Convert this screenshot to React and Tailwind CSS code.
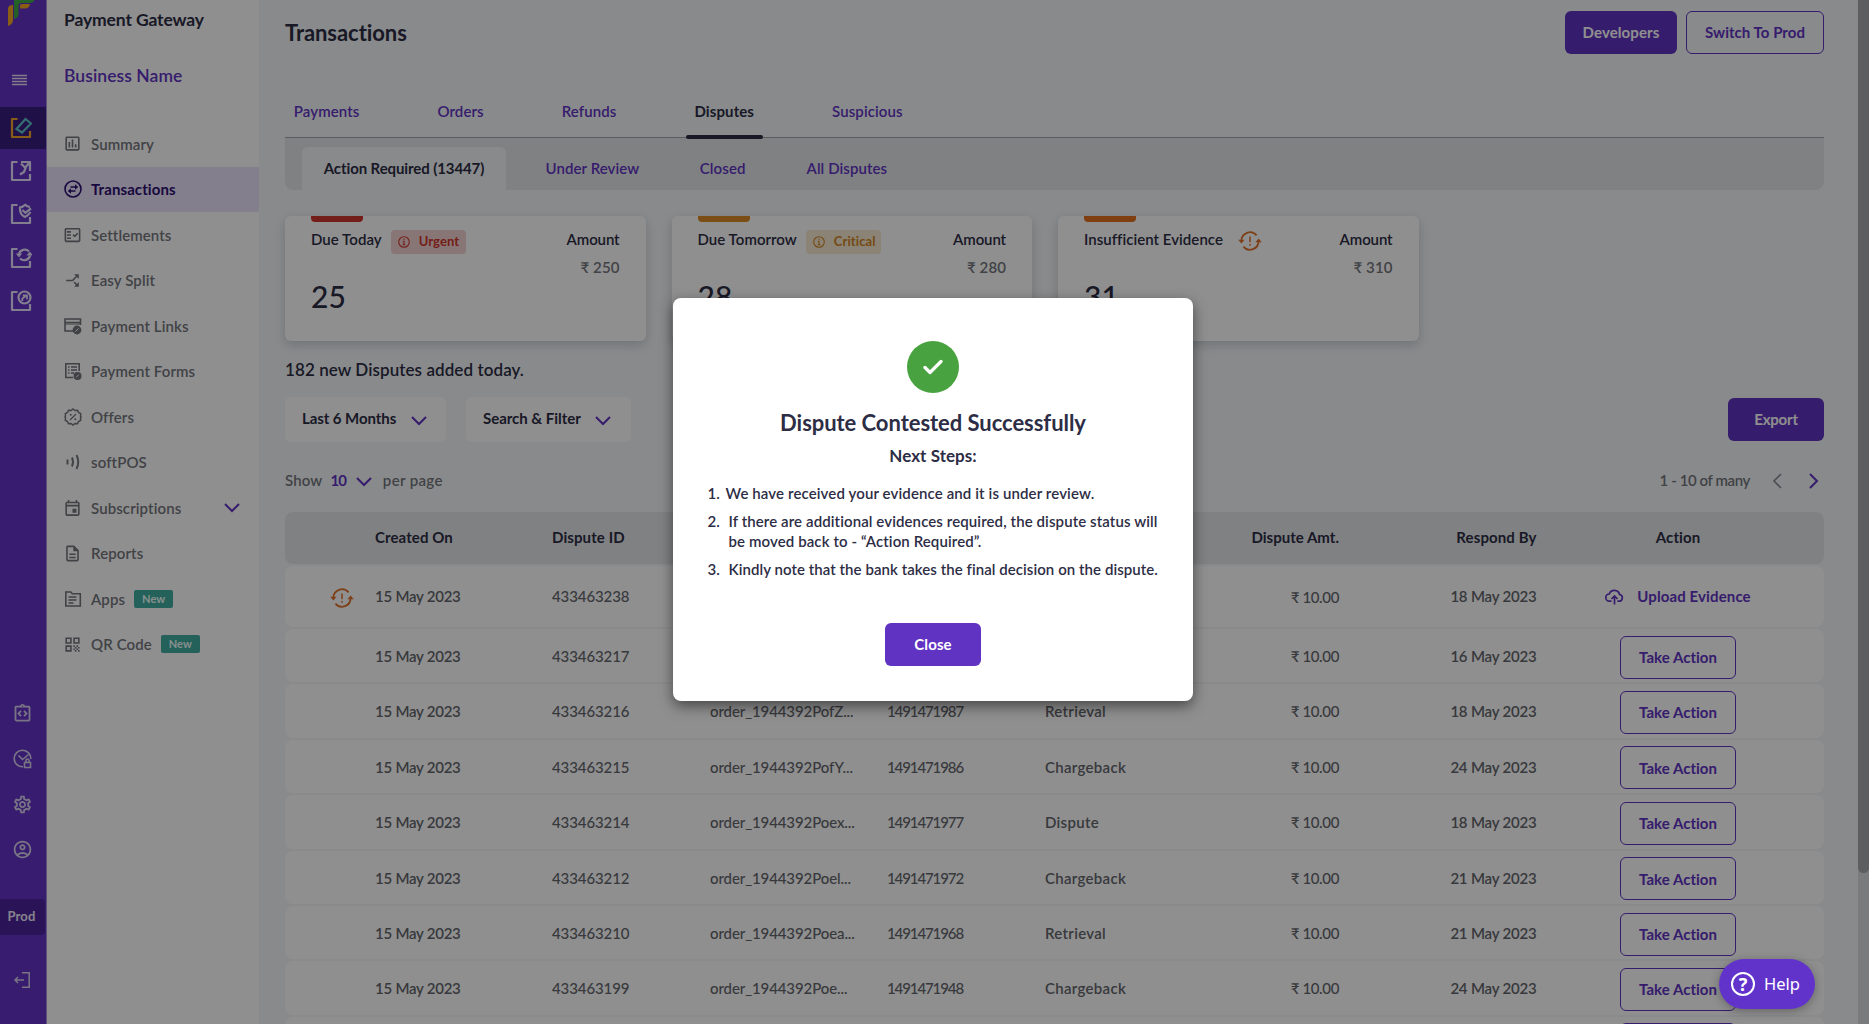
import {
  MdCallSplit,
  MdOutlineAccountCircle,
  MdOutlineDescription,
  MdOutlineEvent,
  MdOutlineFactCheck,
  MdOutlineInsertChartOutlined,
  MdOutlineIntegrationInstructions,
  MdOutlineSettings,
  MdQrCode,
} from 'react-icons/md';

const rows = [
  { id: '433463217', order: '', ref: '', type: '', respond: '16 May 2023' },
  { id: '433463216', order: 'order_1944392PofZ...', ref: '1491471987', type: 'Retrieval', respond: '18 May 2023' },
  { id: '433463215', order: 'order_1944392PofY...', ref: '1491471986', type: 'Chargeback', respond: '24 May 2023' },
  { id: '433463214', order: 'order_1944392Poex...', ref: '1491471977', type: 'Dispute', respond: '18 May 2023' },
  { id: '433463212', order: 'order_1944392Poel...', ref: '1491471972', type: 'Chargeback', respond: '21 May 2023' },
  { id: '433463210', order: 'order_1944392Poea...', ref: '1491471968', type: 'Retrieval', respond: '21 May 2023' },
  { id: '433463199', order: 'order_1944392Poe...', ref: '1491471948', type: 'Chargeback', respond: '24 May 2023' },
];

const tableCols = 'grid grid-cols-[90px_177px_158px_177px_158px_294px_197.5px_283px] items-center';

function Chevron({ className = '' }) {
  return (
    <svg viewBox="0 0 16 10" className={`h-[10px] w-4 shrink-0 ${className}`} fill="none" stroke="#6133c2" strokeWidth="2">
      <path d="M1 1l7 7 7-7" />
    </svg>
  );
}

// circular arrows with an exclamation mark
function RetryAlert({ className = '' }) {
  return (
    <svg viewBox="0 0 24 20" className={`h-5 w-6 shrink-0 ${className}`} fill="none" stroke="#e0702a" strokeWidth="1.7">
      <path d="M3.4 10A8.6 8.6 0 0 1 18.6 4.4" />
      <path d="M20.6 10A8.6 8.6 0 0 1 5.4 15.6" />
      <path d="M0.2 8.8h6.4L3.4 12.4z M17.4 11.2h6.4L20.6 7.6z" fill="#e0702a" stroke="none" />
      <path d="M12 5.5v5.8M12 13v1.7" strokeWidth="1.5" />
    </svg>
  );
}

function InfoIcon({ className = '' }) {
  return (
    <svg viewBox="0 0 12 12" className={`size-3 ${className}`} fill="none" stroke="currentColor" strokeWidth="1.1">
      <circle cx="6" cy="6" r="5.3" />
      <path d="M4.8 5.2H6v3.4M4.6 8.8h2.8M6 2.7v1.3" />
    </svg>
  );
}

/* ---- left rail ---- */

function RailBox({ children, stroke = '#e9e0ff' }) {
  return (
    <svg viewBox="0 0 22 22" className="size-[22px]" fill="none" strokeWidth="2.2" strokeLinejoin="round">
      <path d="M7.5 2H2v18h18v-6" stroke={stroke} />
      {children}
    </svg>
  );
}

function Rail() {
  return (
    <aside className="flex w-[47px] shrink-0 flex-col border-r border-[#a48fdc] bg-[#6433c6]">
      <svg viewBox="0 0 46 28" className="h-7 w-[46px]">
        <path d="M8 26V9q0-4 5-4v15q0 4-5 6z" fill="#f7a823" />
        <path d="M20 8.5V5.5q0-1.5 2-1.5h8q-1 4.5-5 4.5z" fill="#f7a823" />
        <path d="M14 19V0h20.500q-1.500 3-5 3h-8Q18.500 3 18.500 6v8q0 4-4.500 5z" fill="#3fae49" />
      </svg>
      <svg viewBox="0 0 15 12" className="mt-[46px] ml-3 h-3 w-[15px]" stroke="#e6dff6" strokeWidth="1.4">
        <path d="M0 1.500h15M0 4.500h15M0 7.500h15M0 10.500h15" />
      </svg>
      <div className="mt-[21px] flex h-[42px] items-center bg-[#3a1d80] pl-[9.5px]">
        <RailBox stroke="#f5a52c">
          <path d="M6.5 12L15.5 2l5.500 4.500L12 15.500z" stroke="#5ec4c9" strokeLinejoin="miter" />
        </RailBox>
      </div>
      <div className="mt-[11px] flex flex-col gap-[21.4px] pl-[9.5px]">
        <RailBox>
          <path d="M11 2h9v9" stroke="#e9e0ff" />
          <path d="M11 3.500l4.500 4.500-1.500 4-4 2.500M15 8l4.500-5.500" stroke="#e9e0ff" />
        </RailBox>
        <RailBox>
          <path d="M20 4q-3-.3-4.800-2.300Q13 4 10 4.300 9.500 11.500 15 14q3-1.200 5.500-5" stroke="#e9e0ff" />
          <path d="M12.500 7l2.800 2.800L21 5.500" stroke="#e9e0ff" />
        </RailBox>
        <RailBox>
          <path d="M9 7a5.800 5.300 0 0 1 10-2.500M20 8.500a5.800 5.300 0 0 1-10 3" stroke="#e9e0ff" />
          <path d="M5.800 6.500h6.400L9 10.500zM16.500 8.500H23l-3.200-4z" fill="#e9e0ff" />
        </RailBox>
        <RailBox>
          <circle cx="14.500" cy="7.500" r="6" stroke="#e9e0ff" />
          <path d="M12.300 11V8.500l3.400-2.500M12.800 5.300h4.200v4" stroke="#e9e0ff" strokeWidth="1.8" />
        </RailBox>
      </div>
      <div className="mt-[391px] flex flex-col items-center gap-[24.3px] pr-[2px] text-[21px] text-[#d9d0ee]">
        <MdOutlineIntegrationInstructions />
        <svg viewBox="0 0 21 21" className="size-[21px]" fill="none" stroke="currentColor" strokeWidth="1.6">
          <path d="M11 18.800A8.300 8.300 0 1 1 18.800 11" />
          <path d="M6.500 7.500l4 4 6-5" />
          <path d="M12.500 14.500h6v5h-6zM14 14v-1.500a1.500 1.500 0 0 1 3 0V14" />
        </svg>
        <MdOutlineSettings />
        <MdOutlineAccountCircle />
      </div>
      <div className="mt-[39px] flex h-[36px] w-[45px] items-center justify-center rounded-r bg-[#4b229a] pr-[2px] text-[13px] font-bold text-[#efe9fb]">
        Prod
      </div>
      <svg viewBox="0 0 16 16" className="mt-[37px] ml-[14px] size-4" fill="none" stroke="#d9d0ee" strokeWidth="1.5">
        <path d="M8 .8h7.200v14.400H8M10 8H1.500M4 5L1 8l3 3" />
      </svg>
    </aside>
  );
}

/* ---- navigation ---- */

const line = { fill: 'none', stroke: 'currentColor', strokeWidth: 1.6 };

const SwapIcon = () => (
  <svg viewBox="0 0 18 18" className="size-[18px]" {...line}>
    <circle cx="9" cy="9" r="8" />
    <path d="M6.500 7h5M6.500 11h5" />
    <path d="M11 4.200L14.200 7 11 9.800zM7 8.200L3.800 11 7 13.800z" fill="currentColor" stroke="none" />
  </svg>
);

const LinksIcon = () => (
  <svg viewBox="0 0 18 18" className="size-[18px]" {...line}>
    <path d="M9 14H1V2h15.500v6M1 5.500h15.500" />
    <path d="M1 7h15.500" strokeWidth="1" />
    <circle cx="13" cy="13" r="3.600" fill="currentColor" />
    <path d="M11.500 14.500l3-3" stroke="#fff" strokeWidth="1" />
  </svg>
);

const FormsIcon = () => (
  <svg viewBox="0 0 18 18" className="size-[18px]" {...line}>
    <path d="M9 15.500H1.800V1.800h13.400V9" />
    <path d="M4 5h1.500M7 5h6M4 8h1.500M7 8h6M4 11h1.500M7 11h3" strokeWidth="1.3" />
    <circle cx="13.500" cy="14" r="3.200" fill="currentColor" />
    <path d="M12.200 15.300l2.600-2.600" stroke="#fff" strokeWidth="1" />
  </svg>
);

const OffersIcon = () => (
  <svg viewBox="0 0 18 18" className="size-[18px]" {...line}>
    <path d="M9 1l2 1.500 2.500-.3 1 2.300 2.200 1.200L16.500 8.200 17 9l-.5 1.200.2 2.200-2.200 1.100-1 2.300-2.500-.3L9 17l-2-1.500-2.500.3-1-2.300-2.200-1.100.2-2.400L1 9l.5-1-.2-2.300 2.200-1.200 1-2.300 2.500.3z" strokeWidth="1.5" />
    <path d="M6 12l6-6" strokeWidth="1.3" />
    <circle cx="6.700" cy="6.700" r="1" fill="currentColor" stroke="none" />
    <circle cx="11.300" cy="11.300" r="1" fill="currentColor" stroke="none" />
  </svg>
);

const SoftPosIcon = () => (
  <svg viewBox="0 0 18 18" className="size-[18px]" {...line}>
    <path d="M3.500 6.500v5M8 4.500q2 4.500 0 9M12.500 2q3.500 7 0 14" strokeWidth="1.9" />
  </svg>
);

const AppsIcon = () => (
  <svg viewBox="0 0 18 18" className="size-[18px]" {...line}>
    <path d="M1.800 2h5l1.500 1.800h8V16H1.800z" />
    <path d="M4.500 7h8M4.500 10h8M4.500 13h5" strokeWidth="1.4" />
  </svg>
);

const menu = [
  { label: 'Summary', icon: <MdOutlineInsertChartOutlined size={21} /> },
  { label: 'Transactions', icon: <SwapIcon />, active: true },
  { label: 'Settlements', icon: <MdOutlineFactCheck size={20} /> },
  { label: 'Easy Split', icon: <MdCallSplit size={23} className="rotate-90" /> },
  { label: 'Payment Links', icon: <LinksIcon /> },
  { label: 'Payment Forms', icon: <FormsIcon /> },
  { label: 'Offers', icon: <OffersIcon /> },
  { label: 'softPOS', icon: <SoftPosIcon /> },
  { label: 'Subscriptions', icon: <MdOutlineEvent size={20} />, expandable: true },
  { label: 'Reports', icon: <MdOutlineDescription size={21} /> },
  { label: 'Apps', icon: <AppsIcon />, isNew: true },
  { label: 'QR Code', icon: <MdQrCode size={19} />, isNew: true },
];

function Sidebar() {
  return (
    <nav className="w-[212px] shrink-0 bg-white">
      <p className="mt-[9px] pl-[17px] text-[17.5px] leading-[22px] font-bold tracking-[-0.13px]">Payment Gateway</p>
      <p className="mt-[34px] pl-[17px] text-[17.5px] leading-[22px] font-semibold tracking-[0.06px] text-[#6133c2]">Business Name</p>
      <ul className="mt-[34px]">
        {menu.map((item) => (
          <li
            key={item.label}
            className={`flex h-[45.5px] items-center pl-4 ${item.active ? 'bg-[#ece3fb] font-bold text-[#2b0f70]' : 'font-semibold text-[#74767d]'}`}
          >
            <span className="flex w-[19px] shrink-0 justify-center">{item.icon}</span>
            <span className="ml-[9px] tracking-[0.1px]">{item.label}</span>
            {item.isNew && (
              <span className="ml-[9px] flex h-[18px] w-[39px] items-center justify-center rounded-[2px] bg-[#3fada0] text-[11px] font-bold text-[#f0fffd]">New</span>
            )}
            {item.expandable && <Chevron className="mr-[19px] ml-auto" />}
          </li>
        ))}
      </ul>
    </nav>
  );
}

/* ---- summary cards ---- */

function Card({ title, bar, value, amount, children }) {
  return (
    <div className="flex h-[125px] w-[360.5px] justify-between rounded-md bg-white px-[26px] shadow-[0_4px_12px_rgba(70,80,100,0.25)]">
      <div>
        <div className={`h-1.5 w-[52px] rounded-b ${bar}`} />
        <div className="mt-1 flex h-[26px] items-center">
          <span className="font-semibold tracking-[0.04px]">{title}</span>
          {children}
        </div>
        <p className="mt-6 text-[30px] leading-10 font-medium">{value}</p>
      </div>
      <div className="mt-[10px] text-right font-semibold">
        <p className="leading-[26px] tracking-[-0.1px]">Amount</p>
        <p className="mt-[2px] leading-[26px] tracking-[0.1px] text-[#74767d]">₹ {amount}</p>
      </div>
    </div>
  );
}

function Tabs() {
  const tabs = ['Payments', 'Orders', 'Refunds', 'Disputes', 'Suspicious'];
  return (
    <div className="mt-[31px] flex h-[53px] gap-[60.4px] border-b border-[#a3a5ac]">
      {tabs.map((tab) => (
        <div
          key={tab}
          className={`relative px-[8.8px] leading-[52px] tracking-[0.1px] ${tab === 'Disputes' ? 'font-bold' : 'font-semibold text-[#6133c2]'}`}
        >
          {tab}
          {tab === 'Disputes' && <div className="absolute inset-x-0 -bottom-[2px] h-1 rounded-sm bg-[#2b2b45]" />}
        </div>
      ))}
    </div>
  );
}

function TakeAction() {
  return (
    <button className="mt-[3px] h-[43px] w-[116px] rounded-md border-[1.5px] border-[#6133c2] font-bold tracking-[0.02px] text-[#6133c2]">
      Take Action
    </button>
  );
}

function Table() {
  return (
    <div className="flex flex-col gap-[2px]">
      <div className={`${tableCols} h-[52px] rounded-lg bg-[#e4e7e9] pb-px font-bold`}>
        <span />
        <span>Created On</span>
        <span>Dispute ID</span>
        <span />
        <span />
        <span className="text-right tracking-[0.02px]">Dispute Amt.</span>
        <span className="text-right">Respond By</span>
        <span className="text-center">Action</span>
      </div>
      <div className={`${tableCols} h-[61px] rounded-lg bg-white font-medium text-[#64666d]`}>
        <RetryAlert className="mt-[2px] ml-[45px]" />
        <span className="font-semibold tracking-[-0.25px]">15 May 2023</span>
        <span className="tracking-[-0.1px]">433463238</span>
        <span />
        <span />
        <span className="pt-px text-right tracking-[-0.35px]">₹ 10.00</span>
        <span className="text-right font-semibold tracking-[-0.2px]">18 May 2023</span>
        <span className="flex items-center justify-center gap-[13px] font-bold tracking-[0.12px] text-[#6133c2]">
          <svg viewBox="0 0 19 17" className="h-[17px] w-[19px]" fill="none" stroke="currentColor" strokeWidth="1.7">
            <path d="M6.500 13.200H4.500a3.600 3.600 0 0 1-.2-7.200A5.400 5.400 0 0 1 14.600 6.500a3.400 3.400 0 0 1-.2 6.700h-2" />
            <path d="M9.500 16.500V8.500M6.500 11l3-3 3 3" />
          </svg>
          Upload Evidence
        </span>
      </div>
      {rows.map((row) => (
        <div key={row.id} className={`${tableCols} h-[53.4px] shrink-0 rounded-lg bg-white font-medium text-[#64666d]`}>
          <span />
          <span className="pt-px font-semibold tracking-[-0.25px]">15 May 2023</span>
          <span className="pt-px tracking-[-0.1px]">{row.id}</span>
          <span className="pt-px tracking-[-0.1px]">{row.order}</span>
          <span className="pt-px tracking-[-1.1px]">{row.ref}</span>
          <span className="flex justify-between pt-px">
            <span className="font-semibold tracking-[0.3px]">{row.type}</span>
            <span className="tracking-[-0.35px]">₹ 10.00</span>
          </span>
          <span className="pt-px text-right font-semibold tracking-[-0.2px]">{row.respond}</span>
          <span className="flex justify-center"><TakeAction /></span>
        </div>
      ))}
      {/* next row, only its top edge is in view */}
      <div className="flex h-[53px] shrink-0 justify-end rounded-lg bg-white pt-[4px] pr-[88px]">
        <div className="mt-[2px] h-[43px] w-[116px] rounded-md border-[1.5px] border-[#6133c2]" />
      </div>
    </div>
  );
}

function Dashboard() {
  return (
    <main className="w-[1599px] shrink-0 bg-[#f4f7f9] pl-[26px]">
      <div className="w-[1539px]">
        <header className="flex h-[54px] items-end pt-[11px]">
          <h1 className="mr-auto text-[22px] leading-[43px] font-bold tracking-[-0.06px]">Transactions</h1>
          <button className="h-[43px] w-[112px] rounded-md bg-[#6133c2] font-bold text-white">Developers</button>
          <button className="ml-[9px] h-[43px] w-[138px] rounded-md border-[1.5px] border-[#6133c2] font-bold tracking-[0.04px] text-[#6133c2]">Switch To Prod</button>
        </header>
        <Tabs />
        <div className="flex h-[52px] items-end rounded-b-lg bg-[#e4e7e9] leading-[43px] font-semibold text-[#6133c2]">
          <span className="ml-[17px] h-[43px] w-[204px] rounded-t-md bg-[#f4f7f9] text-center font-bold tracking-[-0.1px] text-[#2d2d45]">Action Required (13447)</span>
          <span className="ml-[39.5px] tracking-[0.08px]">Under Review</span>
          <span className="ml-[60.5px]">Closed</span>
          <span className="ml-[61px] tracking-[0.08px]">All Disputes</span>
        </div>

        <div className="mt-[26px] flex gap-[26px]">
          <Card title="Due Today" bar="bg-[#cf362d]" value="25" amount="250">
            <span className="mt-[5px] ml-[9px] flex h-6 w-[75px] items-center rounded-sm bg-[#f3d3d2] pl-[7px] text-[13px] font-bold text-[#cf362d]">
              <InfoIcon className="mr-[9px]" />Urgent
            </span>
          </Card>
          <Card title="Due Tomorrow" bar="bg-[#db8c26]" value="28" amount="280">
            <span className="mt-[5px] ml-[9px] flex h-6 w-[75px] items-center rounded-sm bg-[#f6ead2] pl-[7px] text-[13px] font-bold text-[#d08423]">
              <InfoIcon className="mr-[9px]" />Critical
            </span>
          </Card>
          <Card title="Insufficient Evidence" bar="bg-[#e2701f]" value="31" amount="310">
            <RetryAlert className="mt-1 ml-[15px]" />
          </Card>
        </div>

        <p className="h-[56px] text-[17px] leading-[57px] font-semibold tracking-[0.08px]">182 new Disputes added today.</p>

        <div className="flex h-[45px] items-center font-bold">
          <div className="flex h-full w-[161px] items-center justify-between rounded-md bg-white pr-[19px] pb-[2px] pl-[17px]">
            <span className="tracking-[-0.07px]">Last 6 Months</span><Chevron className="mt-1" />
          </div>
          <div className="ml-5 flex h-full w-[165px] items-center justify-between rounded-md bg-white pr-5 pb-[2px] pl-[17px]">
            <span className="tracking-[-0.03px]">Search &amp; Filter</span><Chevron className="mt-1" />
          </div>
          <button className="mb-px ml-auto h-[43px] w-24 rounded-md bg-[#6133c2] font-bold tracking-[-0.2px] text-white">Export</button>
        </div>

        <div className="flex h-[70px] items-center pt-[7px] font-semibold text-[#74767d]">
          <span className="tracking-[0.15px]">Show</span>
          <span className="ml-2 font-bold tracking-[-1px] text-[#6133c2]">10</span>
          <Chevron className="mt-[3px] ml-[10px]" />
          <span className="ml-[11px] tracking-[0.35px]">per page</span>
          <span className="ml-auto tracking-[-0.4px]">1 - 10 of many</span>
          <svg viewBox="0 0 10 16" className="ml-[22px] h-4 w-[10px]" fill="none" stroke="#8d8f96" strokeWidth="1.7"><path d="M9 1L2 8l7 7" /></svg>
          <svg viewBox="0 0 10 16" className="mr-[5px] ml-[27px] h-4 w-[10px]" fill="none" stroke="#6133c2" strokeWidth="2"><path d="M1 1l7 7-7 7" /></svg>
        </div>

        <Table />
      </div>
    </main>
  );
}

function SuccessDialog() {
  return (
    <div className="absolute inset-0 flex items-center justify-center bg-black/44 pr-[3px] pb-[26px]">
      <div className="flex h-[403px] w-[520px] flex-col items-center rounded-lg bg-white px-[34.5px] shadow-[0_5px_14px_rgba(0,0,0,0.5)]">
        <div className="mt-[43px] flex size-[52px] items-center justify-center rounded-full bg-[#48a23f]">
          <svg viewBox="0 0 20 16" className="h-4 w-5" fill="none" stroke="#fff" strokeWidth="3.2" strokeLinecap="round" strokeLinejoin="round">
            <path d="M2 8.500L7 13.500 18 2.500" />
          </svg>
        </div>
        <h2 className="mt-4 text-[22px] leading-7 font-bold tracking-[-0.05px]">Dispute Contested Successfully</h2>
        <h3 className="mt-[7px] text-[17px] leading-6 font-bold tracking-[0.05px]">Next Steps:</h3>
        <ol className="mt-4 flex w-full flex-col gap-[9px] leading-[19.5px] font-semibold tracking-[0.1px]">
          <li className="flex"><span className="w-[18px]">1.</span><span className="tracking-[0.12px]">We have received your evidence and it is under review.</span></li>
          <li className="flex"><span className="w-[21px] shrink-0">2.</span><span className="whitespace-nowrap">If there are additional evidences required, the dispute status will<br />be moved back to - “Action Required”.</span></li>
          <li className="flex"><span className="w-[21px] shrink-0">3.</span><span className="tracking-[0.06px] whitespace-nowrap">Kindly note that the bank takes the final decision on the dispute.</span></li>
        </ol>
        <button className="mt-[43px] h-[43px] w-[96px] rounded-md bg-[#6133c2] font-bold text-white">Close</button>
      </div>
    </div>
  );
}

export default function App() {
  return (
    <div className="relative flex h-screen w-full overflow-hidden bg-white font-['Lato',sans-serif] text-[15px] tracking-[0.1px] text-[#2d2d45] [font-variant-ligatures:none]">
      <Rail />
      <Sidebar />
      <Dashboard />
      <div className="grow bg-[#d8dbde]">
        <div className="h-[873px] rounded-b-full bg-[#a6a8ab]" />
      </div>
      <SuccessDialog />
      <button className="absolute right-[54px] bottom-[15px] flex h-[50px] w-24 items-center rounded-full bg-[#6233cb] pl-3 font-['Noto_Sans',sans-serif] text-[16.5px] tracking-normal text-white shadow-[0_2px_10px_rgba(0,0,0,0.3)]">
        <span className="mr-[9px] flex size-6 items-center justify-center rounded-full border-2 border-white text-[18px] leading-none font-bold">?</span>
        Help
      </button>
    </div>
  );
}
